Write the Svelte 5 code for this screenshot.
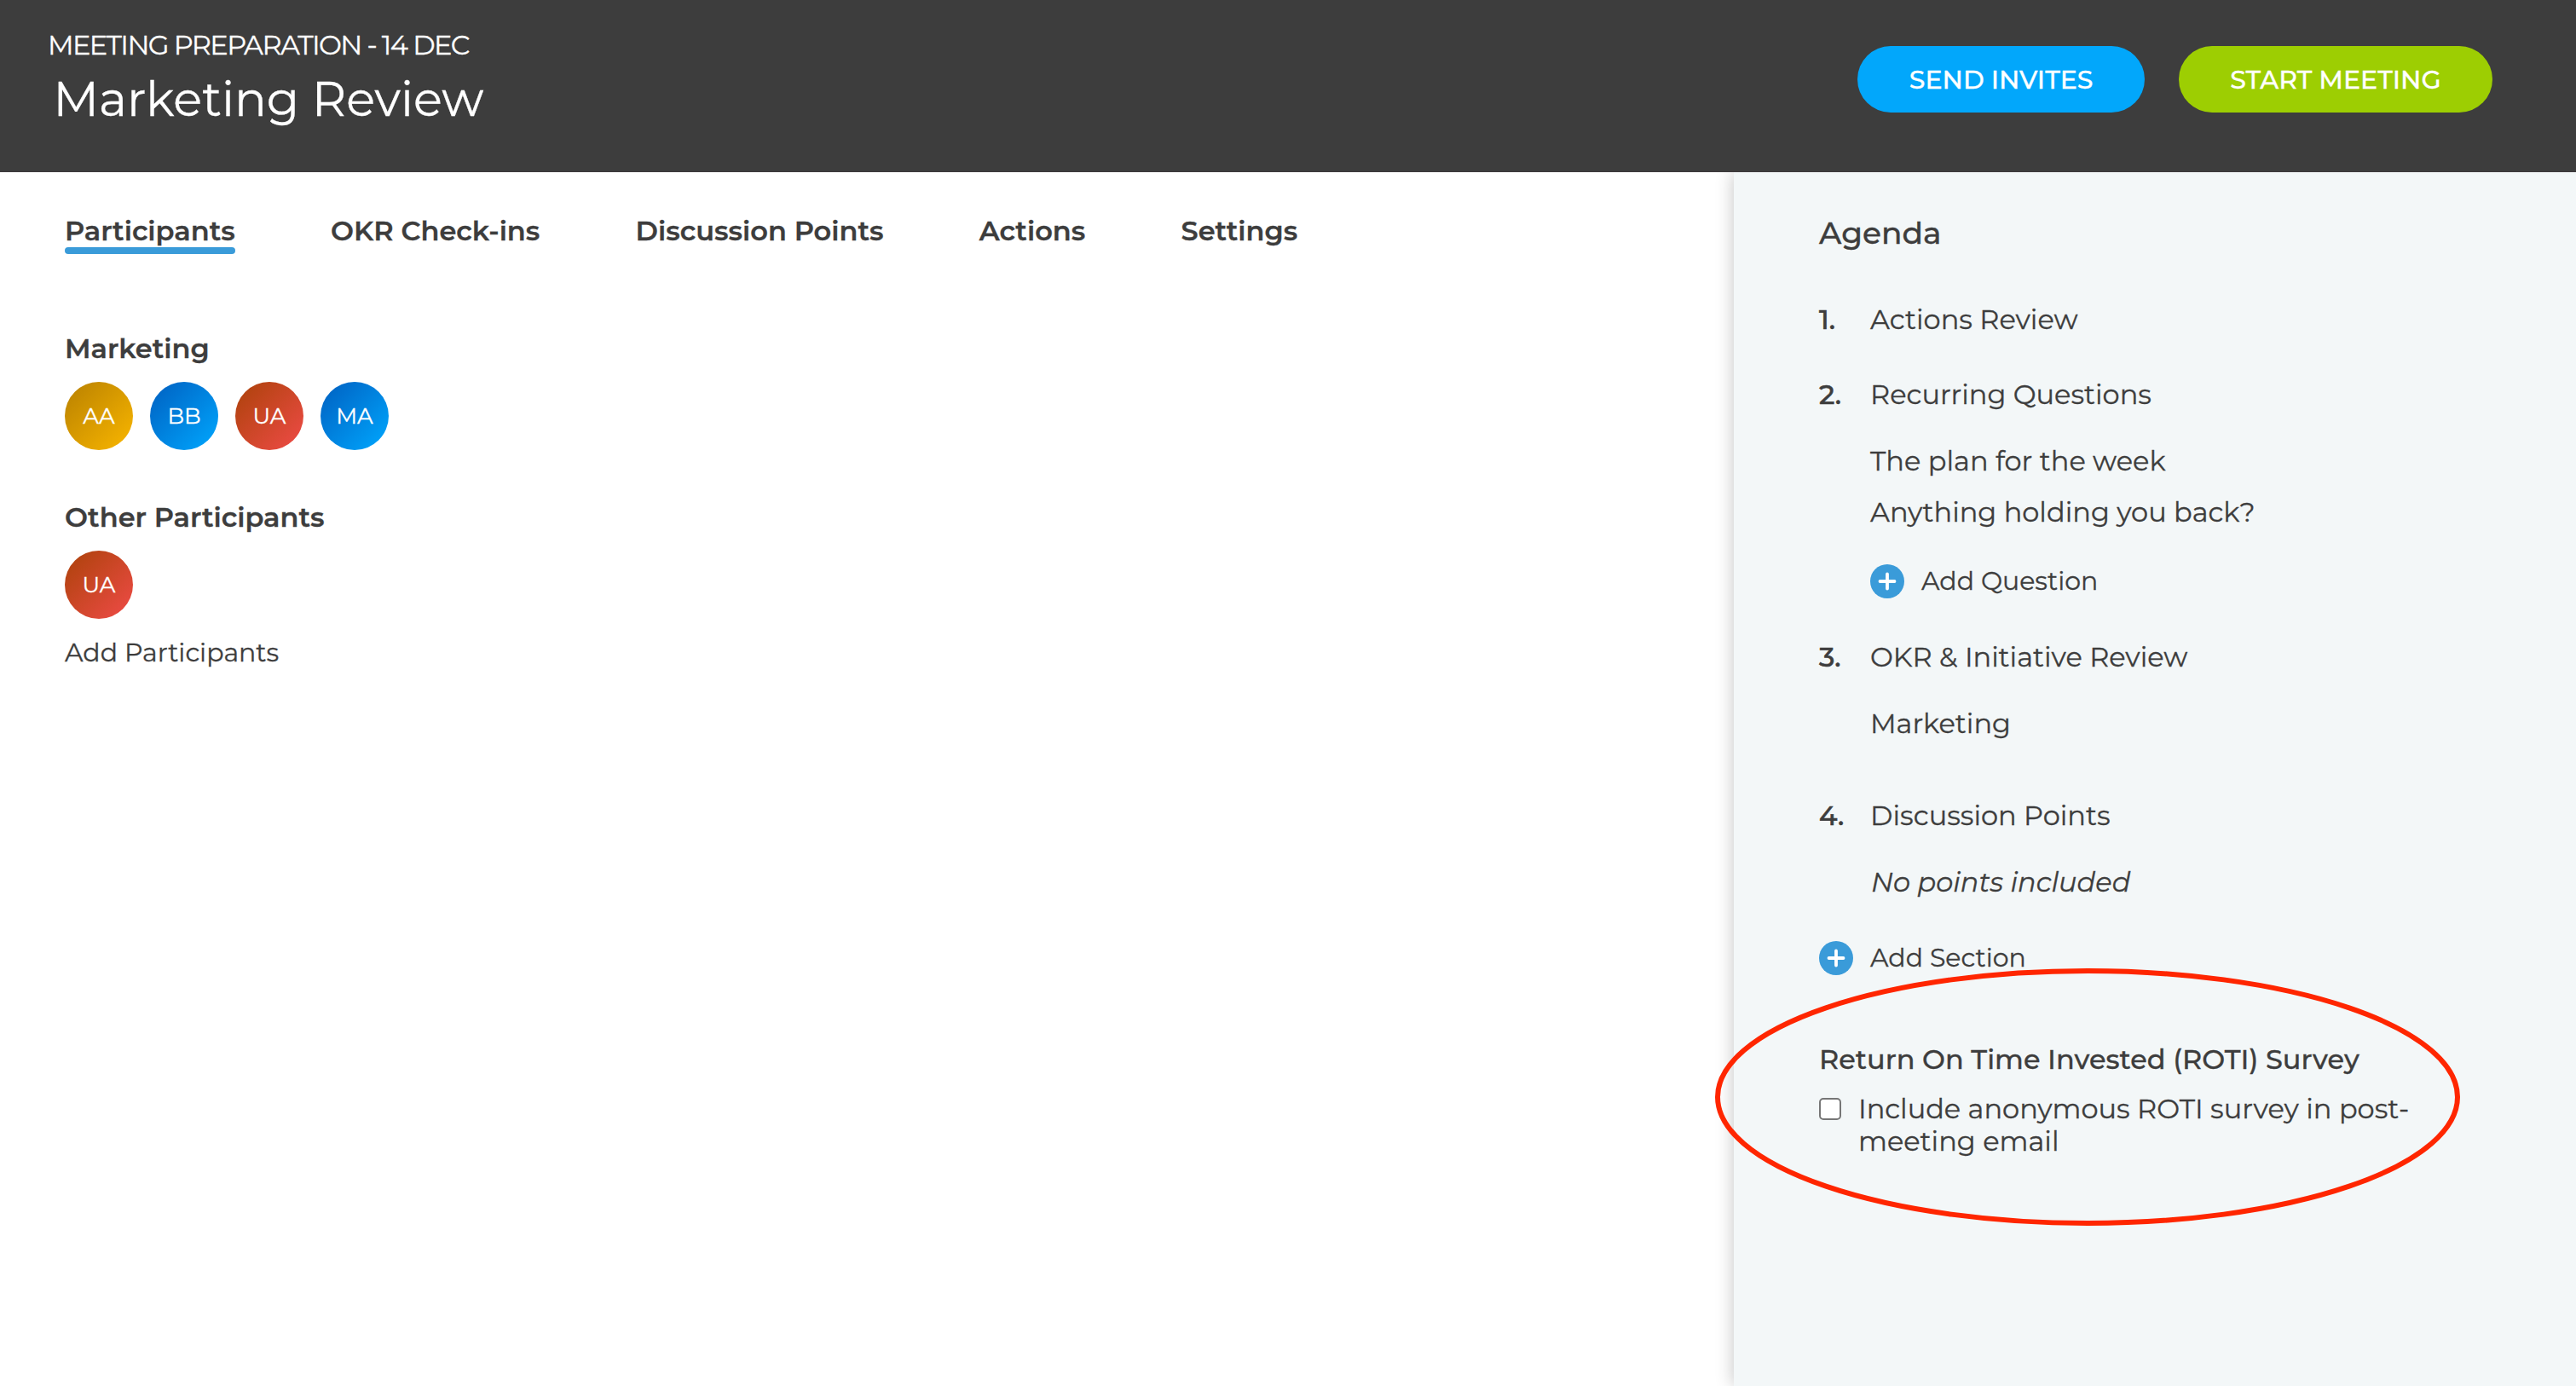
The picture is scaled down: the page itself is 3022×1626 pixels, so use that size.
<script lang="ts">
  type Person = { initials: string; color: string };

  const tabs = ["Participants", "OKR Check-ins", "Discussion Points", "Actions", "Settings"];
  let activeTab = "Participants";

  const team: Person[] = [
    { initials: "AA", color: "yellow" },
    { initials: "BB", color: "blue" },
    { initials: "UA", color: "red" },
    { initials: "MA", color: "blue" },
  ];
  const others: Person[] = [{ initials: "UA", color: "red" }];

  const questions = ["The plan for the week", "Anything holding you back?"];
  let includeSurvey = false;
</script>

<div class="page">
  <header class="header">
    <div>
      <p class="subtitle">MEETING PREPARATION - 14 DEC</p>
      <h1 class="title">Marketing Review</h1>
    </div>
    <div class="buttons">
      <button class="button invite">SEND INVITES</button>
      <button class="button start">START MEETING</button>
    </div>
  </header>

  <div class="body">
    <main class="content">
      <nav class="tabs">
        {#each tabs as tab}
          <button class="tab" class:active={tab === activeTab} on:click={() => (activeTab = tab)}>
            {tab}
          </button>
        {/each}
      </nav>

      <section class="group">
        <h2>Marketing</h2>
        <div class="avatars">
          {#each team as person}
            <span class="avatar {person.color}">{person.initials}</span>
          {/each}
        </div>
      </section>

      <section class="group">
        <h2>Other Participants</h2>
        <div class="avatars">
          {#each others as person}
            <span class="avatar {person.color}">{person.initials}</span>
          {/each}
        </div>
        <button class="add-participants">Add Participants</button>
      </section>
    </main>

    <aside class="sidebar">
      <h2 class="agenda-title">Agenda</h2>

      <ol class="agenda">
        <li>
          <span class="number">1.</span>
          <div>Actions Review</div>
        </li>
        <li>
          <span class="number">2.</span>
          <div>
            Recurring Questions
            <div class="details">
              {#each questions as question}
                <p>{question}</p>
              {/each}
            </div>
            <button class="add add-question">
              <svg viewBox="0 0 40 40" width="40" height="40">
                <circle cx="20" cy="20" r="20" fill="#3a9bd9" />
                <path d="M20 11.5v17M11.5 20h17" stroke="#fff" stroke-width="3.8" stroke-linecap="round" />
              </svg>
              <span>Add Question</span>
            </button>
          </div>
        </li>
        <li>
          <span class="number">3.</span>
          <div>
            OKR &amp; Initiative Review
            <div class="details spaced"><p>Marketing</p></div>
          </div>
        </li>
        <li>
          <span class="number">4.</span>
          <div>
            Discussion Points
            <div class="details"><p><em>No points included</em></p></div>
          </div>
        </li>
      </ol>

      <button class="add add-section">
        <svg viewBox="0 0 40 40" width="40" height="40">
          <circle cx="20" cy="20" r="20" fill="#3a9bd9" />
          <path d="M20 11.5v17M11.5 20h17" stroke="#fff" stroke-width="3.8" stroke-linecap="round" />
        </svg>
        <span>Add Section</span>
      </button>

      <section class="survey">
        <h3>Return On Time Invested (ROTI) Survey</h3>
        <label>
          <input type="checkbox" bind:checked={includeSurvey} />
          <span>Include anonymous ROTI survey in post-meeting email</span>
        </label>
        <svg class="highlight" viewBox="0 0 874 302" width="874" height="302">
          <ellipse cx="437" cy="151" rx="434" ry="148" fill="none" stroke="#ff2600" stroke-width="6" />
        </svg>
      </section>
    </aside>
  </div>
</div>

<style>
  :global(body) {
    background: #fff;
  }

  .page {
    height: 1626px;
    display: flex;
    flex-direction: column;
    overflow: hidden;
    font-family: "Montserrat", "Inter", sans-serif;
    font-size: 32px;
    color: #3d3d3d;
    -webkit-text-stroke: 0.3px;
  }

  h1,
  h2,
  h3,
  p,
  ol {
    margin: 0;
    padding: 0;
  }

  button {
    border: none;
    padding: 0;
    background: none;
    font-family: inherit;
    color: inherit;
    cursor: pointer;
  }

  .header {
    box-sizing: border-box;
    height: 202px;
    flex: none;
    display: flex;
    justify-content: space-between;
    align-items: flex-start;
    padding: 33px 98px 0 56px;
    background: #3d3d3d;
    border-bottom: 1px solid #3d393c;
    color: #fff;
    position: relative;
    z-index: 1;
  }

  .subtitle {
    letter-spacing: -1.6px;
  }

  .title {
    margin-top: 10px;
    padding-left: 6.5px;
    font-size: 56px;
    font-weight: 400;
  }

  .buttons {
    display: flex;
    gap: 40px;
    padding-top: 21px;
  }

  .button {
    height: 78px;
    padding: 0 60.4px;
    border-radius: 39px;
    font-size: 30px;
    font-weight: 500;
  }

  .invite {
    background: #02a7fb;
  }

  .start {
    background: #9dce02;
  }

  .body {
    flex: 1;
    display: flex;
  }

  .content {
    flex: 1;
    padding: 49px 76px 0;
  }

  .tabs {
    display: flex;
    gap: 112.3px;
    margin-bottom: 91px;
  }

  .tab {
    font-size: 32px;
    font-weight: 600;
  }

  .tab::after {
    content: "";
    display: block;
    height: 8px;
    border-radius: 4px;
  }

  .tab.active::after {
    background: #3a9bd9;
  }

  .group {
    margin-bottom: 59px;
  }

  .group h2 {
    font-size: 32px;
    font-weight: 600;
    margin-bottom: 20px;
  }

  .avatars {
    display: flex;
    gap: 20px;
  }

  .avatar {
    width: 80px;
    height: 80px;
    border-radius: 50%;
    display: flex;
    align-items: center;
    justify-content: center;
    font-size: 26px;
    color: #fff;
  }

  .yellow {
    background: linear-gradient(135deg, #b88000, #fab700);
  }

  .blue {
    background: linear-gradient(135deg, #005fc0, #00a8ff);
  }

  .red {
    background: linear-gradient(135deg, #ab4209, #f04b48);
  }

  .add-participants {
    display: block;
    margin-top: 21px;
    font-size: 30px;
  }

  .sidebar {
    box-sizing: border-box;
    width: 988px;
    padding: 49px 180px 0 100px;
    background: #f3f7f8;
    box-shadow: 0 0 20px rgba(0, 0, 0, 0.24);
  }

  .agenda-title {
    font-size: 36px;
    font-weight: 500;
    margin-bottom: 60px;
  }

  .agenda {
    list-style: none;
    display: flex;
    flex-direction: column;
    gap: 49px;
  }

  .agenda li {
    display: flex;
  }

  .number {
    width: 60px;
    font-weight: 500;
    -webkit-text-stroke: 0.6px;
  }

  .details {
    display: flex;
    flex-direction: column;
    gap: 21px;
    margin-top: 39px;
  }

  .details em {
    padding-left: 1px;
  }

  .spaced {
    margin-bottom: 20px;
  }

  .add {
    display: flex;
    align-items: center;
    gap: 20px;
    height: 40px;
    font-size: 30px;
  }

  .add span {
    padding-bottom: 1px;
  }

  .add-question {
    margin-top: 42px;
  }

  .add-section {
    margin-top: 50px;
  }

  .survey {
    position: relative;
    margin-top: 79px;
  }

  .survey h3 {
    font-size: 32px;
    font-weight: 500;
  }

  .survey label {
    display: flex;
    align-items: flex-start;
    gap: 20px;
    margin-top: 20px;
    line-height: 38px;
  }

  .survey input {
    appearance: none;
    box-sizing: border-box;
    flex: none;
    width: 26px;
    height: 26px;
    margin: 6px 0 0;
    border: 2px solid #767676;
    border-radius: 5px;
    background: #fff;
  }

  .highlight {
    position: absolute;
    left: -122px;
    top: -87px;
    pointer-events: none;
  }
</style>
